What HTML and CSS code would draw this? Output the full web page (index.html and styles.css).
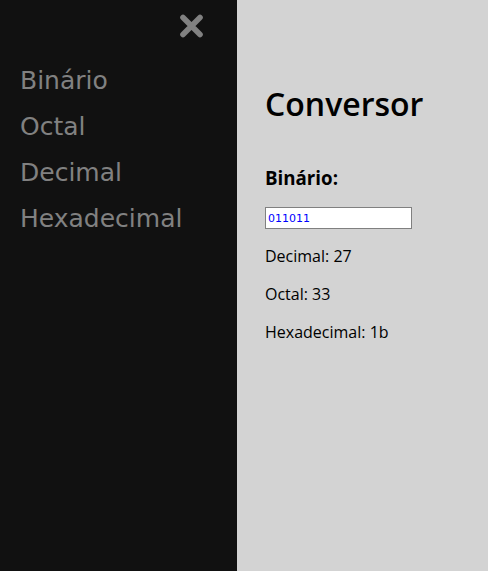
FILE: index.html
```html
<!DOCTYPE html>
<html lang="pt">
<head>
<meta charset="utf-8">
<link rel="stylesheet" href="styles.css">
</head>
<body>
<aside class="sidenav">
  <div class="close-row">
    <a class="closebtn" href="#" aria-label="Fechar">
      <svg width="25" height="26" viewBox="0 0 25 26"><path d="M4 4.5 L21 21.5 M21 4.5 L4 21.5" stroke="#818181" stroke-width="5.6" stroke-linecap="round" fill="none"/></svg>
    </a>
  </div>
  <nav class="menu">
    <a href="#">Binário</a>
    <a href="#">Octal</a>
    <a href="#">Decimal</a>
    <a href="#">Hexadecimal</a>
  </nav>
</aside>
<main class="main">
  <h1 class="title">Conversor</h1>
  <h3 class="label">Binário:</h3>
  <input class="field" type="text" value="011011">
  <p class="result">Decimal: 27</p>
  <p class="result">Octal: 33</p>
  <p class="result">Hexadecimal: 1b</p>
</main>
</body>
</html>
```
FILE: styles.css
```css
html, body {
  margin: 0;
  height: 100%;
}
body {
  display: flex;
  font-family: "Open Sans", sans-serif;
}
.sidenav {
  width: 237px;
  flex: none;
  background: #111111;
  display: flex;
  flex-direction: column;
}
.close-row {
  display: flex;
  justify-content: flex-end;
  padding: 13px 33px 0 0;
}
.closebtn {
  display: block;
  width: 25px;
  height: 26px;
}
.closebtn svg {
  display: block;
}
.menu {
  display: flex;
  flex-direction: column;
  margin-top: 19px;
}
.menu a {
  display: block;
  padding: 8px 8px 8px 20px;
  font-family: "DejaVu Sans", sans-serif;
  font-size: 25px;
  line-height: 30px;
  color: #818181;
  text-decoration: none;
}
.main {
  flex: 1;
  background: #d3d3d3;
  padding: 82px 28px 0 28px;
}
.title {
  margin: 0;
  font-size: 32px;
  font-weight: 600;
  line-height: normal;
  color: #000;
}
.label {
  margin: 40px 0 0 0;
  font-size: 18.72px;
  font-weight: 700;
  line-height: normal;
}
.field {
  display: block;
  box-sizing: border-box;
  width: 147px;
  height: 22px;
  margin: 17px 0 0 0;
  padding: 1px 2px;
  border: 1px solid #808080;
  background: #fff;
  color: #0000ff;
  font-family: "DejaVu Sans", sans-serif;
  font-size: 11px;
  outline: none;
}
.result {
  margin: 16px 0;
  font-size: 16px;
  line-height: normal;
}
```
